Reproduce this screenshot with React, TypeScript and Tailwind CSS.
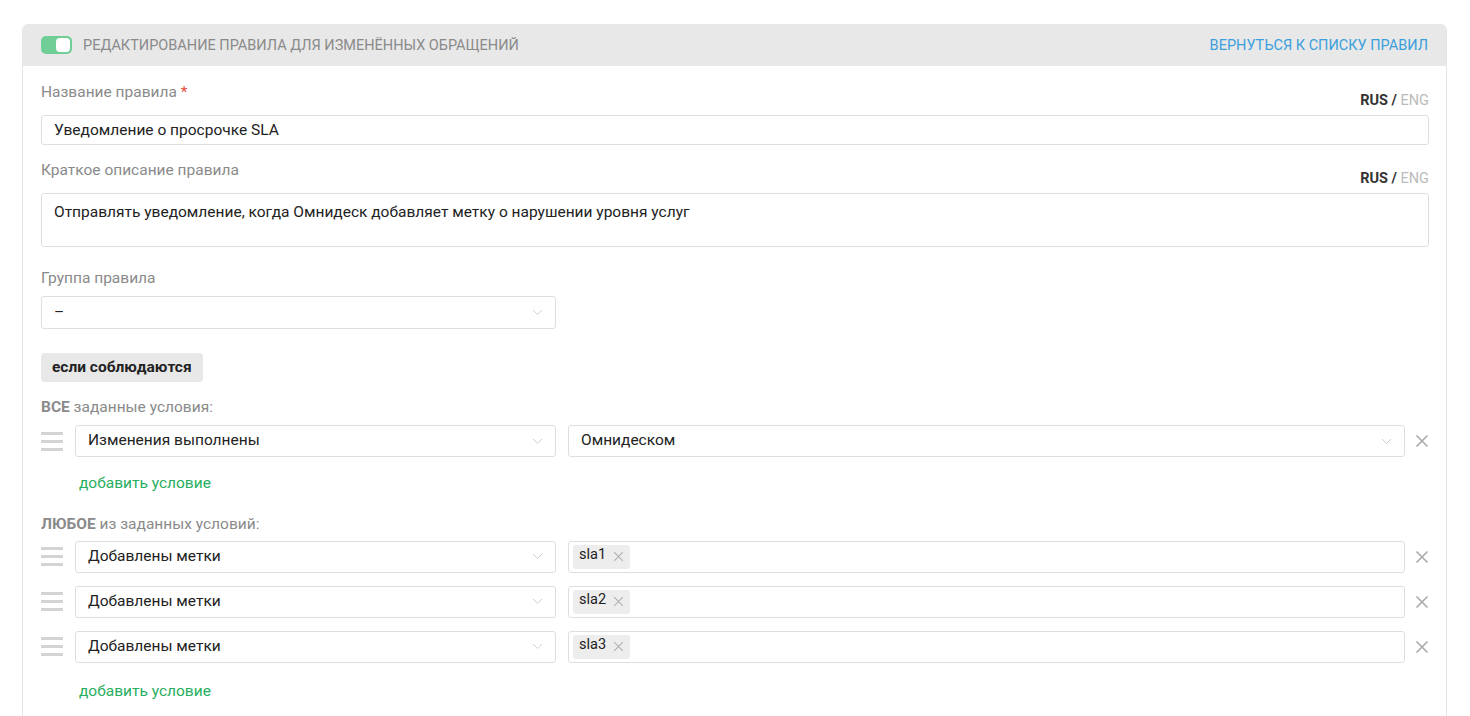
const font = { fontFamily: 'Roboto, "Liberation Sans", sans-serif' }

function Chevron() {
  return (
    <svg width="11" height="7" viewBox="0 0 11 7" className="shrink-0">
      <path d="M1 1l4.5 4.5L10 1" fill="none" stroke="#cfcfcf" strokeWidth="1" />
    </svg>
  )
}

function Cross({ size = 14, color = '#aaa', stroke = 1.6 }: { size?: number; color?: string; stroke?: number }) {
  return (
    <svg width={size} height={size} viewBox="0 0 14 14" className="shrink-0">
      <path d="M1.5 1.5l11 11M12.5 1.5l-11 11" stroke={color} strokeWidth={stroke} />
    </svg>
  )
}

function Handle() {
  return (
    <div className="flex w-[22px] shrink-0 flex-col gap-[5px]">
      <div className="h-[3px] bg-[#d4d4d4]" />
      <div className="h-[3px] bg-[#d4d4d4]" />
      <div className="h-[3px] bg-[#d4d4d4]" />
    </div>
  )
}

function Select({ value, className = '' }: { value: string; className?: string }) {
  return (
    <div className={`flex h-8 items-center justify-between rounded-[3px] border border-[#dedede] bg-white pl-3 pr-[12px] ${className}`}>
      <span className="text-[15.5px] text-[#222]">{value}</span>
      <Chevron />
    </div>
  )
}

function LangSwitch() {
  return (
    <div className="text-[14.5px]">
      <span className="font-bold text-[#333]">RUS</span>
      <span className="font-bold text-[#333]"> / </span>
      <span className="text-[#bbb]">ENG</span>
    </div>
  )
}

type Row = { field: string; value?: string; tag?: string }

function ConditionRow({ row }: { row: Row }) {
  return (
    <div className="flex items-center">
      <Handle />
      <Select value={row.field} className="ml-3 w-[481px]" />
      {row.tag ? (
        <div className="ml-3 flex h-8 flex-1 items-center rounded-[3px] border border-[#dedede] bg-white pl-1">
          <div className="flex h-6 items-center gap-[7px] rounded-[3px] bg-[#ededed] pl-[6px] pr-[6px]">
            <span className="-mt-[3px] text-[14.5px] text-[#222]">{row.tag}</span>
            <Cross size={11} color="#b0b0b0" stroke={1.4} />
          </div>
        </div>
      ) : (
        <Select value={row.value ?? ''} className="ml-3 flex-1" />
      )}
      <div className="ml-[10px] flex w-[14px] justify-end">
        <Cross />
      </div>
    </div>
  )
}

function AddCondition() {
  return <div className="pl-[38px] text-[15.5px] text-[#27ae60]">добавить условие</div>
}

const allRows: Row[] = [{ field: 'Изменения выполнены', value: 'Омнидеском' }]
const anyRows: Row[] = [
  { field: 'Добавлены метки', tag: 'sla1' },
  { field: 'Добавлены метки', tag: 'sla2' },
  { field: 'Добавлены метки', tag: 'sla3' },
]

export default function App() {
  return (
    <div className="min-h-screen bg-white pl-[22px] pr-[23px] pt-6" style={font}>
      <div className="overflow-hidden rounded-t-[6px] border-x border-[#e5e5e5]">
        {/* header bar */}
        <div className="flex h-[42px] items-center justify-between bg-[#e8e8e8] pl-[18px] pr-[18px]">
          <div className="flex items-center gap-[11px]">
            <div className="flex h-[18px] w-[31px] items-center justify-end rounded-[5px] bg-[#6fcf97] pr-[2px]">
              <div className="h-[14px] w-[14px] rounded-[4px] bg-white" />
            </div>
            <span className="mt-[2px] text-[14.5px] uppercase text-[#8a8a8a]">Редактирование правила для изменённых обращений</span>
          </div>
          <span className="mt-[2px] text-[14.5px] uppercase text-[#3a9fdc]">Вернуться к списку правил</span>
        </div>

        {/* form body */}
        <div className="bg-white pl-[18px] pr-[17px] pb-6">
          <div className="flex items-end justify-between pt-[15px]">
            <div className="text-[15.5px] text-[#8a8a8a]">
              Название правила <span className="text-[#e74c3c]">*</span>
            </div>
            <div className="-mb-[7px]"><LangSwitch /></div>
          </div>
          <div className="mt-[11px] flex h-[30px] items-center rounded-[3px] border border-[#dedede] px-3 text-[15.5px] text-[#222]">
            Уведомление о просрочке SLA
          </div>

          <div className="flex items-end justify-between pt-[14px]">
            <div className="text-[15.5px] text-[#8a8a8a]">Краткое описание правила</div>
            <div className="-mb-[7px]"><LangSwitch /></div>
          </div>
          <div className="mt-[10px] h-[54px] rounded-[3px] border border-[#dedede] px-3 pt-[7px] text-[15.5px] text-[#222]">
            Отправлять уведомление, когда Омнидеск добавляет метку о нарушении уровня услуг
          </div>

          <div className="pt-[20px] text-[15.5px] text-[#8a8a8a]">Группа правила</div>
          <Select value="–" className="mt-[6px] h-[33px] w-[515px]" />

          <div className="mt-6 inline-flex h-[29px] items-center rounded-[4px] bg-[#e8e8e8] px-[11px] text-[15.5px] font-bold text-[#222]">
            если соблюдаются
          </div>

          <div className="mt-[14px] text-[15.5px] text-[#8a8a8a]">
            <span className="font-bold">ВСЕ</span> заданные условия:
          </div>
          <div className="mt-[6px] flex flex-col gap-[13px]">
            {allRows.map((r, i) => (
              <ConditionRow key={i} row={r} />
            ))}
          </div>
          <div className="mt-[15px]"><AddCondition /></div>

          <div className="mt-[18px] text-[15.5px] text-[#8a8a8a]">
            <span className="font-bold">ЛЮБОЕ</span> из заданных условий:
          </div>
          <div className="mt-[4px] flex flex-col gap-[13px]">
            {anyRows.map((r, i) => (
              <ConditionRow key={i} row={r} />
            ))}
          </div>
          <div className="mt-[17px]"><AddCondition /></div>
        </div>
      </div>
    </div>
  )
}
